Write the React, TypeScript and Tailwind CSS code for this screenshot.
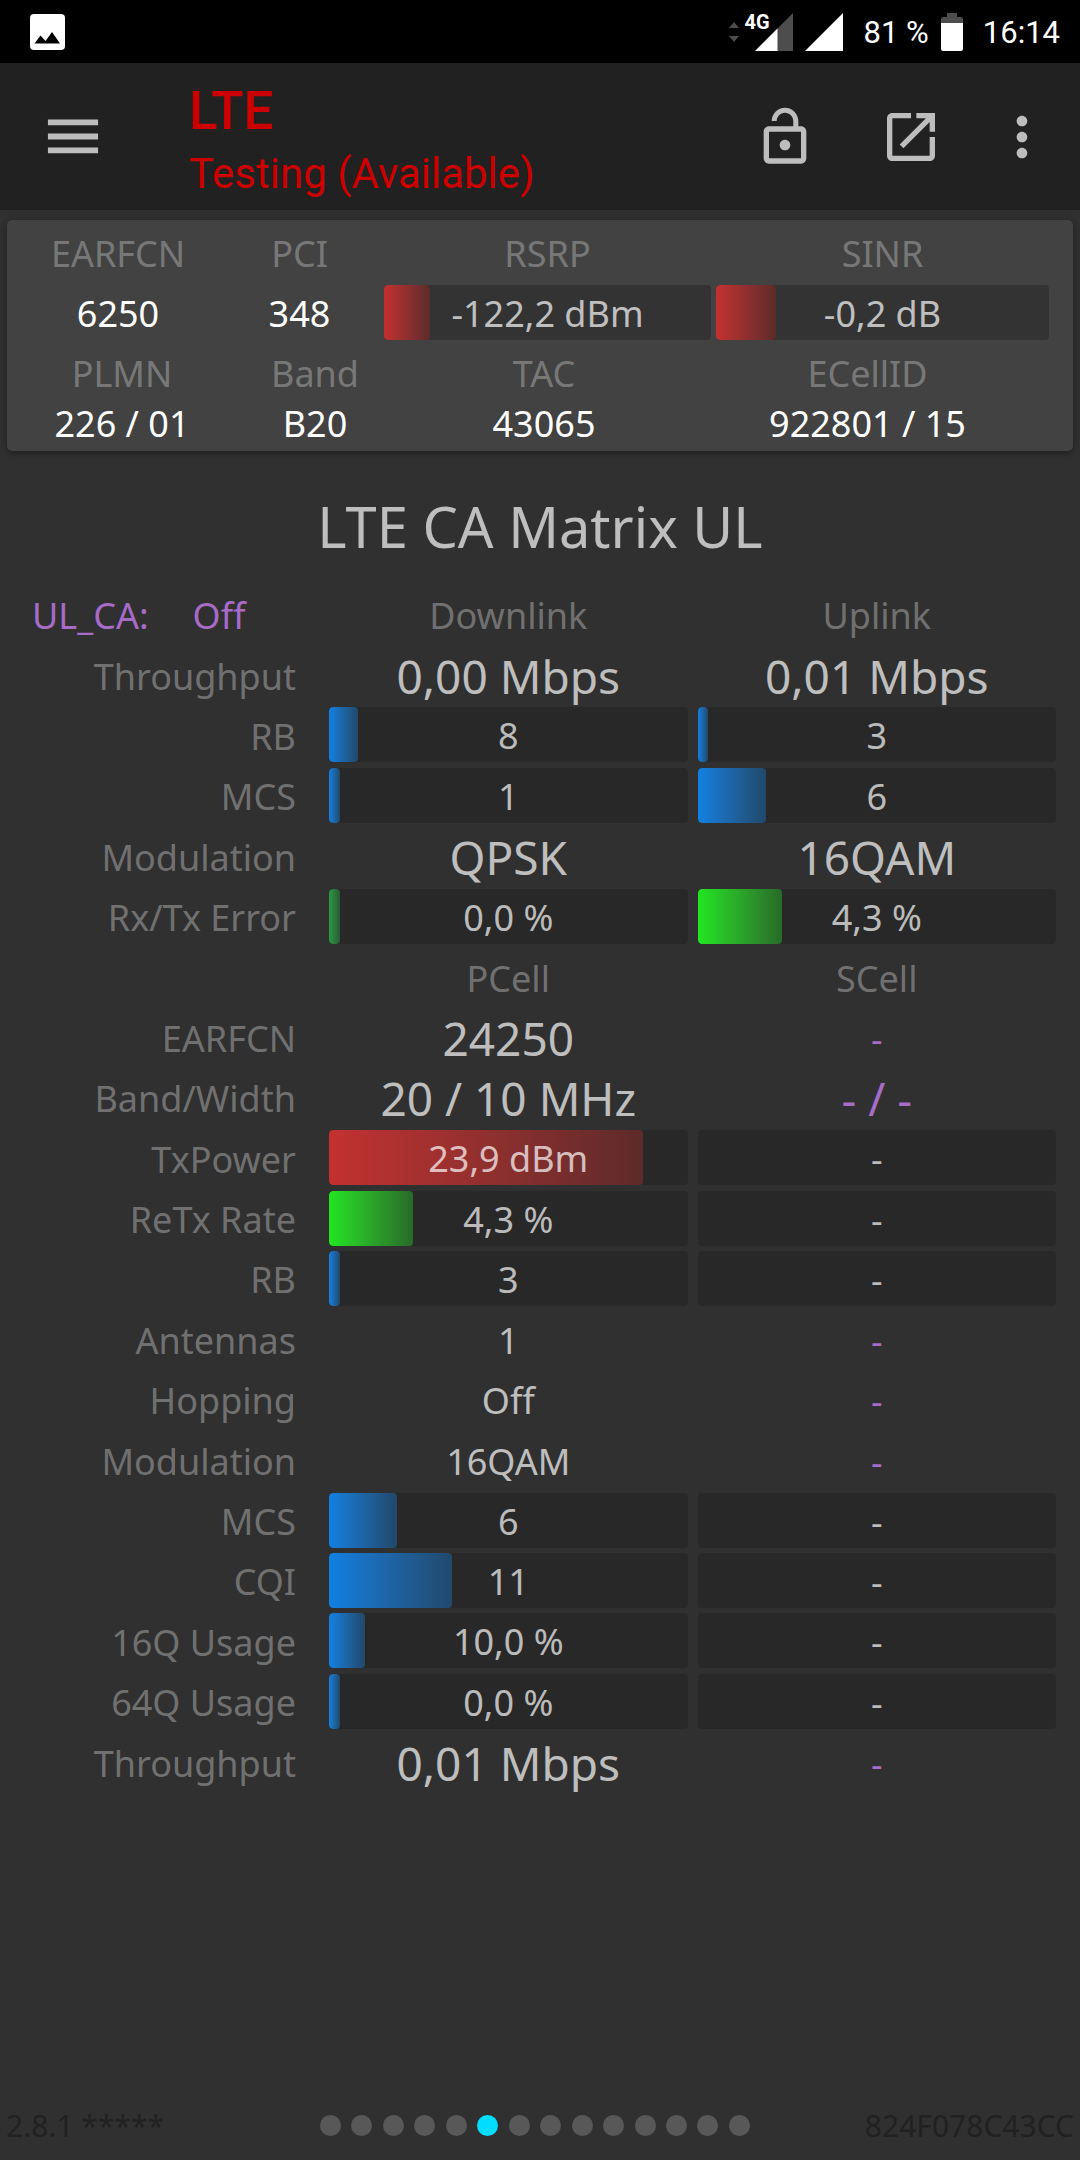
import clsx from "clsx";
import type { ReactNode } from "react";

type Tone = "blue" | "green" | "dimGreen" | "red";

interface Cell {
  text: string;
  kind: "bar" | "big" | "plain" | "none" | "bigNone";
  tone?: Tone;
  fill?: number;
}

interface Row {
  label: string;
  cells: [Cell, Cell];
}

const TONES: Record<Tone, string> = {
  blue: "from-[#1080e2] to-[#20496c]",
  green: "from-[#20e620] to-[#276b27]",
  dimGreen: "from-[#289a44] to-[#285c34]",
  red: "from-[#c43030] to-[#5e2a2a]",
};

const bar = (text: string, tone?: Tone, fill?: number): Cell => ({ text, kind: "bar", tone, fill });
const big = (text: string): Cell => ({ text, kind: "big" });
const plain = (text: string): Cell => ({ text, kind: "plain" });
const none: Cell = { text: "-", kind: "none" };

const linkRows: Row[] = [
  { label: "Throughput", cells: [big("0,00 Mbps"), big("0,01 Mbps")] },
  { label: "RB", cells: [bar("8", "blue", 8), bar("3", "blue", 3)] },
  { label: "MCS", cells: [bar("1", "blue", 3), bar("6", "blue", 19)] },
  { label: "Modulation", cells: [big("QPSK"), big("16QAM")] },
  { label: "Rx/Tx Error", cells: [bar("0,0 %", "dimGreen", 3), bar("4,3 %", "green", 23.5)] },
];

const cellRows: Row[] = [
  { label: "EARFCN", cells: [big("24250"), none] },
  { label: "Band/Width", cells: [big("20 / 10 MHz"), { text: "- / -", kind: "bigNone" }] },
  { label: "TxPower", cells: [bar("23,9 dBm", "red", 87.7), bar("-")] },
  { label: "ReTx Rate", cells: [bar("4,3 %", "green", 23.5), bar("-")] },
  { label: "RB", cells: [bar("3", "blue", 3), bar("-")] },
  { label: "Antennas", cells: [plain("1"), none] },
  { label: "Hopping", cells: [plain("Off"), none] },
  { label: "Modulation", cells: [plain("16QAM"), none] },
  { label: "MCS", cells: [bar("6", "blue", 19), bar("-")] },
  { label: "CQI", cells: [bar("11", "blue", 34.4), bar("-")] },
  { label: "16Q Usage", cells: [bar("10,0 %", "blue", 10), bar("-")] },
  { label: "64Q Usage", cells: [bar("0,0 %", "blue", 3), bar("-")] },
  { label: "Throughput", cells: [big("0,01 Mbps"), none] },
];

const CELL_STYLES: Record<Cell["kind"], string> = {
  bar: "",
  big: "pt-[3px] text-[46px] text-white/70",
  plain: "pt-[3px] text-white/70",
  none: "pt-[3px] text-[#a76bc8]",
  bigNone: "pt-[3px] text-[46px] text-[#a76bc8]",
};

function Bar({ text, tone, fill = 0, track = "bg-[#282828]" }: { text: string; tone?: Tone; fill?: number; track?: string }) {
  return (
    <div className={clsx("relative h-[55px] rounded overflow-hidden", track)}>
      {tone && (
        <div className={clsx("absolute inset-y-0 left-0 rounded bg-linear-to-r", TONES[tone])} style={{ width: `${fill}%` }} />
      )}
      <div className="relative text-center leading-[57px] text-white/70">{text}</div>
    </div>
  );
}

function StatusBar() {
  return (
    <div className="h-[63px] bg-black text-white flex items-center justify-between pl-[30px] pr-5 font-[Roboto,sans-serif] text-[31px]">
      <svg className="w-[35px] h-[36px]" viewBox="0 0 35 36">
        <rect width="35" height="36" rx="4" fill="#fff" />
        <path d="M4.500 29.500 10.500 21.500l5 5.500L22 18l8 11.500z" fill="#000" />
      </svg>
      <div className="flex items-center">
        <svg className="w-[10px] h-[20px] mr-[6px]" viewBox="0 0 10 20" fill="#4d4d4d">
          <path d="M5 0l5 6H0zM5 20l5-6H0z" />
        </svg>
        <div className="relative w-[48px] h-[38px] mr-3">
          <svg className="absolute right-0 top-0 w-[38px] h-[38px]" viewBox="0 0 38 38">
            <path d="M38 0v38H0z" fill="#4d4d4d" />
            <path d="M22.500 15.500V38H0z" fill="#fff" />
          </svg>
          <span className="absolute left-0 top-0 text-[20px] leading-[18px] font-bold">4G</span>
        </div>
        <svg className="w-[38px] h-[38px] mr-[21px]" viewBox="0 0 38 38">
          <path d="M38 0v38H0z" fill="#fff" />
        </svg>
        <span className="pt-[3px]">81 %</span>
        <svg className="w-[22px] h-[38px] mx-3" viewBox="0 0 22 38">
          <path d="M6 0h10v4h4a2 2 0 0 1 2 2v5H0V6a2 2 0 0 1 2-2h4z" fill="#4d4d4d" />
          <path d="M0 10h22v26a2 2 0 0 1-2 2H2a2 2 0 0 1-2-2z" fill="#fff" />
        </svg>
        <span className="pl-2 pt-[3px]">16:14</span>
      </div>
    </div>
  );
}

function IconButton({ label, children }: { label: string; children: ReactNode }) {
  return (
    <button type="button" aria-label={label} className="text-[#bdbdbd]">
      <svg className="size-16" viewBox="0 0 24 24" fill="currentColor">
        {children}
      </svg>
    </button>
  );
}

function AppBar() {
  return (
    <header className="h-[147px] bg-[#212121] flex items-center pl-[41px] pr-[26px]">
      <IconButton label="Menu">
        <path d="M2.600 18.100h18.800v-2.200H2.600zM2.600 12.900h18.800v-2.200H2.600zM2.600 5.400v2.200h18.800V5.400z" />
      </IconButton>
      <div className="flex-1 pl-[84px] pt-2 font-[Roboto,sans-serif] text-[#cc0000]">
        <div className="text-[53px] leading-[66px] font-medium">LTE</div>
        <div className="text-[42px] leading-[60px]">Testing (Available)</div>
      </div>
      <div className="flex items-center">
        <IconButton label="Unlock">
          <path d="M12 17c1.100 0 2-.9 2-2s-.9-2-2-2-2 .9-2 2 .9 2 2 2zm6-9h-1V6c0-2.760-2.240-5-5-5S7 3.240 7 6h1.900c0-1.710 1.390-3.100 3.100-3.100 1.710 0 3.100 1.390 3.100 3.100v2H6c-1.100 0-2 .9-2 2v10c0 1.100.9 2 2 2h12c1.100 0 2-.9 2-2V10c0-1.100-.9-2-2-2zm0 12H6V10h12v10z" />
        </IconButton>
        <div className="w-[62px]" />
        <IconButton label="Open in window">
          <path d="M19 19H5V5h7V3H5c-1.110 0-2 .9-2 2v14c0 1.100.89 2 2 2h14c1.100 0 2-.9 2-2v-7h-2v7zM14 3v2h3.590l-9.830 9.830 1.410 1.410L19 6.410V10h2V3h-7z" />
        </IconButton>
        <div className="w-[47px]" />
        <IconButton label="More">
          <path d="M12 8c1.100 0 2-.9 2-2s-.9-2-2-2-2 .9-2 2 .9 2 2 2zm0 2c-1.100 0-2 .9-2 2s.9 2 2 2 2-.9 2-2-.9-2-2-2zm0 6c-1.100 0-2 .9-2 2s.9 2 2 2 2-.9 2-2-.9-2-2-2z" />
        </IconButton>
      </div>
    </header>
  );
}

function Field({ label, children }: { label: string; children: ReactNode }) {
  return (
    <div className="text-center">
      <dt className="h-[65px] leading-[67px] text-white/30">{label}</dt>
      <dd className="text-white">{children}</dd>
    </div>
  );
}

function CellCard() {
  return (
    <section className="mx-[7px] mt-[10px] rounded-[5px] bg-[#424242] pl-[14px] pr-6 pb-2 shadow-[0_2px_6px_rgba(0,0,0,0.4)]">
      <dl className="grid grid-cols-[194fr_159fr_327fr_333fr] gap-x-[5px] h-[120px] leading-[57px]">
        <Field label="EARFCN">6250</Field>
        <Field label="PCI">348</Field>
        <Field label="RSRP">
          <Bar text="-122,2 dBm" tone="red" fill={14} track="bg-[#333333]" />
        </Field>
        <Field label="SINR">
          <Bar text="-0,2 dB" tone="red" fill={18} track="bg-[#333333]" />
        </Field>
      </dl>
      <dl className="grid grid-cols-[202fr_174fr_274fr_363fr] gap-x-[5px] leading-[38px]">
        <Field label="PLMN">226 / 01</Field>
        <Field label="Band">B20</Field>
        <Field label="TAC">43065</Field>
        <Field label="ECellID">922801 / 15</Field>
      </dl>
    </section>
  );
}

function MatrixRow({ label, cells }: Row) {
  return (
    <tr className="h-[60px]">
      <th scope="row" className="pt-[3px] pr-7 text-right font-normal text-white/33">
        {label}
      </th>
      {cells.map((c, i) => (
        <td key={i} className={clsx("px-[5px] text-center", CELL_STYLES[c.kind])}>
          {c.kind === "bar" ? <Bar text={c.text} tone={c.tone} fill={c.fill} /> : c.text}
        </td>
      ))}
    </tr>
  );
}

function Matrix() {
  return (
    <div className="pr-[19px]">
      <table className="w-full h-[1208px] table-fixed leading-[55px]">
        <tbody>
          <tr className="h-[60px]">
            <th className="w-[324px] pt-[3px] pl-8 text-left font-normal text-[#a76bc8]">
              <span className="pr-11">UL_CA:</span>
              <span>Off</span>
            </th>
            <th className="pt-[3px] font-normal text-white/33">Downlink</th>
            <th className="pt-[3px] font-normal text-white/33">Uplink</th>
          </tr>
          {linkRows.map((r) => (
            <MatrixRow key={r.label} {...r} />
          ))}
          <tr className="h-[60px]">
            <td />
            <th className="pt-[3px] font-normal text-white/33">PCell</th>
            <th className="pt-[3px] font-normal text-white/33">SCell</th>
          </tr>
          {cellRows.map((r) => (
            <MatrixRow key={r.label} {...r} />
          ))}
        </tbody>
      </table>
    </div>
  );
}

function Footer() {
  return (
    <footer className="mt-auto h-[70px] px-[6px] grid grid-cols-[314fr_430px_324fr] items-center text-[30px] text-[#212121]">
      <span>2.8.1 *****</span>
      <div className="flex justify-between">
        {Array.from({ length: 14 }, (_, i) => (
          <span key={i} className={clsx("size-[21px] rounded-full", i === 5 ? "bg-[#00ddff]" : "bg-[#585858]")} />
        ))}
      </div>
      <span className="text-right">824F078C43CC</span>
    </footer>
  );
}

export default function App() {
  return (
    <div className="min-h-screen flex flex-col bg-[#303030] font-['Noto_Sans',sans-serif] text-[36px]">
      <StatusBar />
      <AppBar />
      <CellCard />
      <h1 className="h-[133px] pt-4 flex items-center justify-center text-[56px] text-[#bebebe]">LTE CA Matrix UL</h1>
      <Matrix />
      <Footer />
    </div>
  );
}
